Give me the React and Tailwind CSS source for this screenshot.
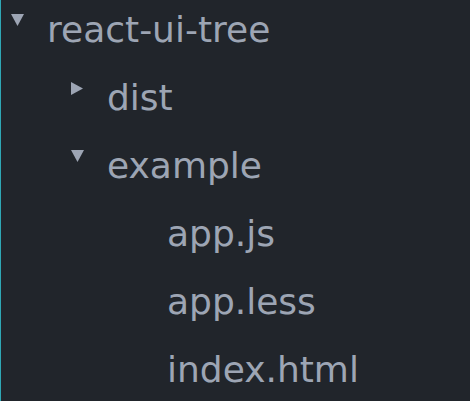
import React from "react";

const tree = [
  { name: "react-ui-tree", level: 0, caret: "down" },
  { name: "dist", level: 1, caret: "right" },
  { name: "example", level: 1, caret: "down" },
  { name: "app.js", level: 2 },
  { name: "app.less", level: 2 },
  { name: "index.html", level: 2 },
];

const PAD = ["pl-[10px]", "pl-[70px]", "pl-[130px]"];

function Caret({ dir }) {
  if (dir === "down") {
    return (
      <svg width="13" height="12" viewBox="0 0 13 12" className="mt-[18px]">
        <polygon points="0,0 13,0 6.5,12" fill="#9da5b4" />
      </svg>
    );
  }
  if (dir === "right") {
    return (
      <svg width="12" height="13" viewBox="0 0 12 13" className="mt-[18px]">
        <polygon points="0,0 12,6.5 0,13" fill="#9da5b4" />
      </svg>
    );
  }
  return null;
}

export default function App() {
  return (
    <div className="w-[470px] h-[401px] overflow-hidden bg-[#21252b] border-l border-[#2fa7b5] text-[#9da5b4] font-['DejaVu_Sans',sans-serif]">
      <div className="-mt-[4px]">
        {tree.map((node) => (
          <div key={node.name} className={`flex items-start h-[68px] ${PAD[node.level]}`}>
            <div className="w-[36px] shrink-0">
              <Caret dir={node.caret} />
            </div>
            <span className="text-[36px] leading-[68px] whitespace-nowrap">{node.name}</span>
          </div>
        ))}
      </div>
    </div>
  );
}
